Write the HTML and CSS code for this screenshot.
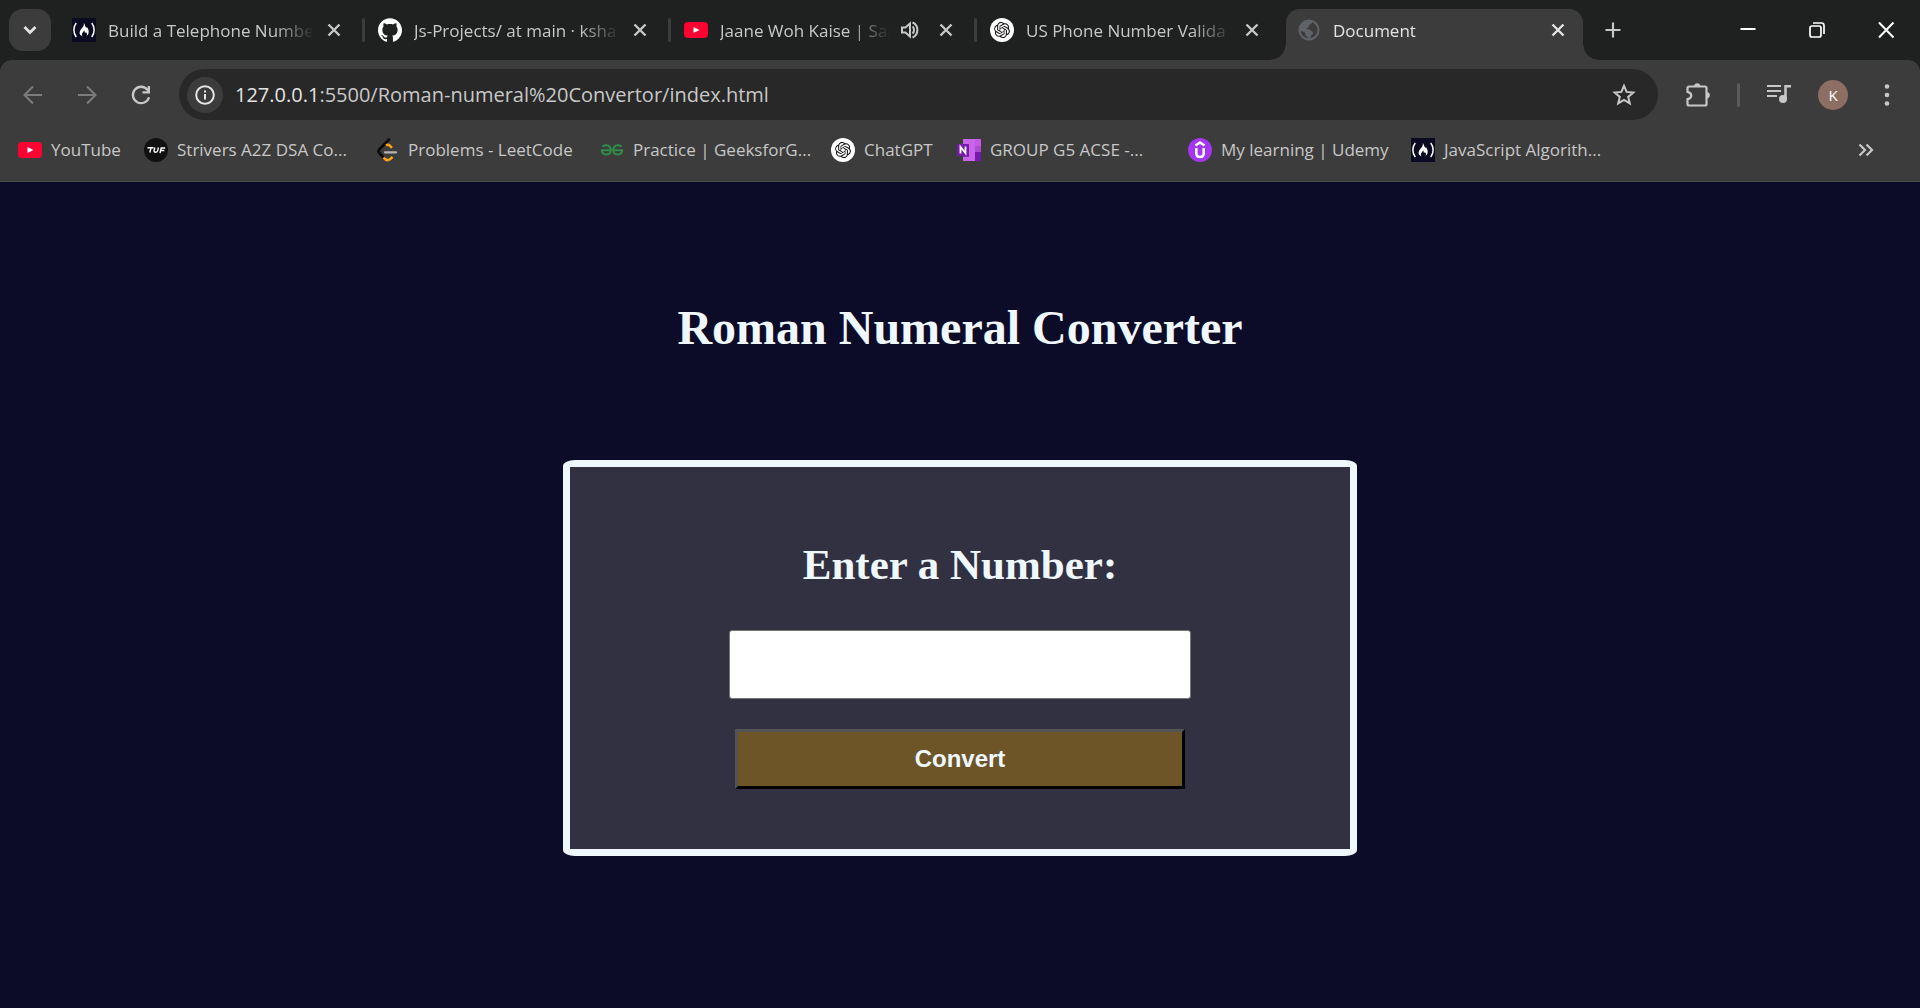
FILE: index.html
```html
<!DOCTYPE html>
<html lang="en">
<head>
<meta charset="utf-8">
<title>Document</title>
<link rel="stylesheet" href="styles.css">
</head>
<body>
<svg class="defs" aria-hidden="true">
  <symbol id="fcc" viewBox="0 0 24 24"><rect width="24" height="24" fill="#0a0a23"/><path d="M4.3 5C1.200 8.600.900 14.800 4.300 19M19.700 5c3.100 3.600 3.400 9.800 0 14" fill="none" stroke="#fff" stroke-width="1.500"/><path d="M11.600 5c1.600 1.200 1.300 3.400 2.500 4.600.5.500.8.300.8-.5 1.900 2.300 3.100 6.900-.4 8.900.9-1.500.6-3.100-.8-4.100.1 1.200-.7 1.300-1 .4-.3-.9.100-1.400-.3-2.100-1.400 2-3.700 4-1.600 6.300C5.500 16.700 8 12.300 10 10.100c1.600-1.700 2.300-3.200 1.600-5.100z" fill="#fff"/></symbol>
  <symbol id="youtube" viewBox="0 0 24 24"><rect y="4" width="24" height="16" rx="4" fill="#ff0033"/><path d="M9.500 9v6l6-3z" fill="#fff"/></symbol>
  <symbol id="openai" viewBox="0 0 36 36"><circle cx="18" cy="18" r="18" fill="#fff"/><path transform="translate(6 6)" fill="#111" d="M22.2819 9.8211a5.9847 5.9847 0 0 0-.5157-4.9108 6.0462 6.0462 0 0 0-6.5098-2.9A6.0651 6.0651 0 0 0 4.9807 4.1818a5.9847 5.9847 0 0 0-3.9977 2.9 6.0462 6.0462 0 0 0 .7427 7.0966 5.98 5.98 0 0 0 .511 4.9107 6.051 6.051 0 0 0 6.5146 2.9001A5.9847 5.9847 0 0 0 13.2599 24a6.0557 6.0557 0 0 0 5.7718-4.2058 5.9894 5.9894 0 0 0 3.9977-2.9001 6.0557 6.0557 0 0 0-.7475-7.0729zm-9.022 12.6081a4.4755 4.4755 0 0 1-2.8764-1.0408l.1419-.0804 4.7783-2.7582a.7948.7948 0 0 0 .3927-.6813v-6.7369l2.02 1.1686a.071.071 0 0 1 .038.052v5.5826a4.504 4.504 0 0 1-4.4945 4.4944zm-9.6607-4.1254a4.4708 4.4708 0 0 1-.5346-3.0137l.142.0852 4.783 2.7582a.7712.7712 0 0 0 .7806 0l5.8428-3.3685v2.3324a.0804.0804 0 0 1-.0332.0615L9.74 19.9502a4.4992 4.4992 0 0 1-6.1408-1.6464zM2.3408 7.8956a4.485 4.485 0 0 1 2.3655-1.9728V11.6a.7664.7664 0 0 0 .3879.6765l5.8144 3.3543-2.0201 1.1685a.0757.0757 0 0 1-.071 0l-4.8303-2.7865A4.504 4.504 0 0 1 2.3408 7.872zm16.5963 3.8558L13.1038 8.364 15.1192 7.2a.0757.0757 0 0 1 .071 0l4.8303 2.7913a4.4944 4.4944 0 0 1-.6765 8.1042v-5.6772a.79.79 0 0 0-.407-.667zm2.0107-3.0231l-.142-.0852-4.7735-2.7818a.7759.7759 0 0 0-.7854 0L9.409 9.2297V6.8974a.0662.0662 0 0 1 .0284-.0615l4.8303-2.7866a4.4992 4.4992 0 0 1 6.6802 4.66zM8.3065 12.863l-2.02-1.1638a.0804.0804 0 0 1-.038-.0567V6.0742a4.4992 4.4992 0 0 1 7.3757-3.4537l-.142.0805L8.704 5.459a.7948.7948 0 0 0-.3927.6813zm1.0976-2.3654l2.602-1.4998 2.6069 1.4998v2.9994l-2.5974 1.4997-2.6067-1.4997Z"/></symbol>
  <symbol id="x" viewBox="0 0 24 24"><path d="M6.500 6.500l11 11m0-11l-11 11" stroke="currentColor" stroke-width="2.400" fill="none"/></symbol>
</svg>

<header class="browser">
  <div class="tabstrip">
    <button class="tab-search" aria-label="Search tabs"><svg viewBox="0 0 24 24"><path d="M6.500 9l5.500 5.500L17.500 9" fill="none" stroke="#e3e3e3" stroke-width="2.800"/></svg></button>
    <nav class="tabs" aria-label="Tabs">
      <div class="tab"><svg class="favicon"><use href="#fcc"/></svg><span class="title">Build a Telephone Numbe</span><button class="icon-btn" aria-label="Close"><svg><use href="#x"/></svg></button></div>
      <i class="divider"></i>
      <div class="tab"><svg class="favicon" viewBox="0 0 24 24"><path fill="#fff" d="M12 .297c-6.630 0-12 5.373-12 12 0 5.303 3.438 9.800 8.205 11.385.6.113.82-.258.82-.577 0-.285-.010-1.040-.015-2.040-3.338.724-4.042-1.610-4.042-1.610C4.422 18.070 3.633 17.700 3.633 17.700c-1.087-.744.084-.729.084-.729 1.205.084 1.838 1.236 1.838 1.236 1.070 1.835 2.809 1.305 3.495.998.108-.776.417-1.305.76-1.605-2.665-.3-5.466-1.332-5.466-5.930 0-1.310.465-2.380 1.235-3.220-.135-.303-.54-1.523.105-3.176 0 0 1.005-.322 3.300 1.230.96-.267 1.980-.399 3-.405 1.020.006 2.040.138 3 .405 2.280-1.552 3.285-1.230 3.285-1.230.645 1.653.24 2.873.12 3.176.765.840 1.230 1.910 1.230 3.220 0 4.610-2.805 5.625-5.475 5.920.42.360.81 1.096.81 2.220 0 1.606-.015 2.896-.015 3.286 0 .315.210.690.825.570C20.565 22.092 24 17.592 24 12.297c0-6.627-5.373-12-12-12"/></svg><span class="title">Js-Projects/ at main · ksha</span><button class="icon-btn" aria-label="Close"><svg><use href="#x"/></svg></button></div>
      <i class="divider"></i>
      <div class="tab"><svg class="favicon"><use href="#youtube"/></svg><span class="title">Jaane Woh Kaise | San</span><button class="icon-btn audio" aria-label="Mute tab"><svg viewBox="0 0 24 24"><path d="M4 9.500h3.500L12 5.500v13l-4.500-4H4z" fill="none" stroke="currentColor" stroke-width="2"/><path d="M14.500 8.500c2 1.500 2 5.500 0 7M14.500 4.500c6.500 2.500 6.500 12.500 0 15" fill="none" stroke="currentColor" stroke-width="2"/></svg></button><button class="icon-btn" aria-label="Close"><svg><use href="#x"/></svg></button></div>
      <i class="divider"></i>
      <div class="tab"><svg class="favicon"><use href="#openai"/></svg><span class="title">US Phone Number Valida</span><button class="icon-btn" aria-label="Close"><svg><use href="#x"/></svg></button></div>
      <div class="tab active"><svg class="favicon" viewBox="0 0 24 24"><circle cx="12" cy="12" r="9.500" fill="#3c3c3c" stroke="#5f6368" stroke-width="2"/><path d="M3 9c1-4 5-7 9-6.500L15.500 4c-.5 2-3.500 2-3.500 4 0 1.500-2 1.500-2.500 2.500S13 11 14 12.500s2 .5 2 2.500-2.500 2-2.500 4.500L12 21.500c-1-3-3.500-3-3.500-5.500S4.500 13.500 2.500 12z" fill="#5f6368"/></svg><span class="title">Document</span><button class="icon-btn" aria-label="Close"><svg><use href="#x"/></svg></button></div>
    </nav>
    <button class="new-tab" aria-label="New tab"><svg viewBox="0 0 24 24"><path d="M12 4.500v15M4.500 12h15" stroke="#c7c7c7" stroke-width="2.200"/></svg></button>
    <div class="window-controls">
      <button aria-label="Minimize"><svg viewBox="0 0 24 24"><path d="M4.500 11h15" stroke="#fff" stroke-width="2"/></svg></button>
      <button aria-label="Restore"><svg viewBox="0 0 24 24"><g fill="none" stroke="#fff" stroke-width="1.700"><rect x="5" y="8" width="11" height="11" rx="2"/><path d="M8 5h8.500A2.500 2.500 0 0 1 19 7.500V16"/></g></svg></button>
      <button aria-label="Close window"><svg viewBox="0 0 24 24"><path d="M5 4.500l14.500 15m0-15L5 19.500" stroke="#fff" stroke-width="2"/></svg></button>
    </div>
  </div>

  <div class="toolbar">
    <div class="nav-buttons">
      <button aria-label="Back"><svg viewBox="0 0 24 24"><path d="M21 12H4.500M12 3.500L3.500 12l8.500 8.500" fill="none" stroke="#7c7c7c" stroke-width="2"/></svg></button>
      <button aria-label="Forward"><svg viewBox="0 0 24 24"><path d="M3 12h16.500M12 3.500l8.500 8.500-8.500 8.500" fill="none" stroke="#7c7c7c" stroke-width="2"/></svg></button>
      <button aria-label="Reload"><svg viewBox="0 0 24 24"><path d="M20 14.200A8.200 8.200 0 1 1 18.500 6.800L20 8.500" fill="none" stroke="#c7c7c7" stroke-width="2.300"/><path d="M21 3v7.500h-7.500V8.300h5.200V3z" fill="#c7c7c7"/></svg></button>
    </div>
    <div class="omnibox">
      <button class="site-info" aria-label="Site information"><svg viewBox="0 0 24 24"><circle cx="12" cy="12" r="8.800" fill="none" stroke="#e3e3e3" stroke-width="2"/><path d="M12 11v5.500M12 7.500v2" stroke="#e3e3e3" stroke-width="2"/></svg></button>
      <div class="url"><span>127.0.0.1</span>:5500/Roman-numeral%20Convertor/index.html</div>
      <button class="star" aria-label="Bookmark this page"><svg viewBox="0 0 24 24"><path d="M12 2.800l2.600 6.100 6.700.6-5.100 4.400 1.600 6.500L12 16.900l-5.800 3.500 1.600-6.500-5.100-4.400 6.700-.6z" fill="none" stroke="#c7c7c7" stroke-width="2"/></svg></button>
    </div>
    <div class="actions">
      <button aria-label="Extensions"><svg viewBox="0 0 28 28"><path d="M5 5.500h16a1.500 1.500 0 0 1 1.500 1.500v16a1.500 1.500 0 0 1-1.500 1.500H5A1.500 1.500 0 0 1 3.500 23v-4.800c5-1 5-6.400 0-7.400V7A1.500 1.500 0 0 1 5 5.500z" fill="none" stroke="#c7c7c7" stroke-width="2.200"/><path d="M10 5.500c0-4.500 6.500-4.500 6.500 0zM22.500 11c4.500 0 4.500 6.500 0 6.500z" fill="#c7c7c7"/></svg></button>
      <i class="divider"></i>
      <button aria-label="Media controls"><svg viewBox="0 0 28 28"><path d="M2 5h14M2 10h14M2 15h10" stroke="#c7c7c7" stroke-width="2.200"/><path d="M20.500 18V5.200H26" fill="none" stroke="#c7c7c7" stroke-width="2.500"/><circle cx="18" cy="18" r="4" fill="#c7c7c7"/></svg></button>
      <button class="avatar" aria-label="Profile">K</button>
      <button aria-label="Menu"><svg viewBox="0 0 28 28" fill="#c7c7c7"><circle cx="14" cy="5.500" r="2.300"/><circle cx="14" cy="14" r="2.300"/><circle cx="14" cy="22.500" r="2.300"/></svg></button>
    </div>
  </div>

  <nav class="bookmarks" aria-label="Bookmarks">
    <a href="#"><svg><use href="#youtube"/></svg>YouTube</a>
    <a href="#"><svg viewBox="0 0 24 24"><circle cx="12" cy="12" r="12" fill="#111"/><path d="M3.500 9.800h6M7 9.800l-1.200 4.700M10.800 9.500l-.7 3q-.3 1.700 1.500 1.700t2.100-1.700l.7-3M16 15l1.200-5h4M16.800 12.500h3.500" fill="none" stroke="#fff" stroke-width="1.400"/></svg>Strivers A2Z DSA Co...</a>
    <a href="#"><svg viewBox="0 0 24 24"><path d="M14 1.500L4.500 11.200q-1.800 2 0 4L8 19" fill="none" stroke="#0a0a0a" stroke-width="2.700" stroke-linecap="round"/><path d="M11 7.500q2.200-1.500 4 .3l2 2M8.500 19.500q3 4 6.500 1.800l2.500-2.300" fill="none" stroke="#ffa116" stroke-width="2.500"/><path d="M10 14.300h11" stroke="#b3b3b3" stroke-width="2.300" stroke-linecap="round"/></svg>Problems - LeetCode</a>
    <a href="#"><svg viewBox="0 0 24 24"><g fill="none" stroke="#2f8d46" stroke-width="2"><path d="M1 12.300h9.800M2.500 8.500C6 6 10.800 7.500 10.800 12c0 5.500-8 6.500-9 .3"/><path d="M23 12.300h-9.800M21.500 8.500C18 6 13.200 7.500 13.200 12c0 5.500 8 6.500 9 .3"/></g></svg>Practice | GeeksforG...</a>
    <a href="#"><svg><use href="#openai"/></svg>ChatGPT</a>
    <a href="#"><svg viewBox="0 0 24 24"><path d="M6 1h18v22H6z" fill="#ca64ea"/><path d="M18 1h6v7h-6z" fill="#c65ae6"/><path d="M18 8h6v6h-6z" fill="#ae4bd5"/><path d="M18 14h6v9h-6z" fill="#7719aa"/><path d="M6 6h6v13H6z" fill="#8a2bb5"/><rect y="6" width="12" height="12" rx="1" fill="#7719aa"/><path d="M3.500 15.500V8.800l5 6.400V8.500" fill="none" stroke="#fff" stroke-width="1.800"/></svg>GROUP G5 ACSE -...</a>
    <a href="#"><svg viewBox="0 0 24 24"><circle cx="12" cy="12" r="12" fill="#a435f0"/><path d="M7.500 7.500L12 4.500l4.500 3M8.300 10v5q0 4 3.700 4t3.700-4v-5" fill="none" stroke="#fff" stroke-width="2.500"/></svg>My learning | Udemy</a>
    <a href="#"><svg><use href="#fcc"/></svg>JavaScript Algorith...</a>
    <button class="overflow" aria-label="More bookmarks"><svg viewBox="0 0 24 24"><path d="M5.500 6.500l5.500 5.500-5.500 5.500M12.500 6.500l5.500 5.500-5.500 5.500" fill="none" stroke="#c7c7c7" stroke-width="2.200"/></svg></button>
  </nav>
</header>

<main class="page">
  <h1>Roman Numeral Converter</h1>
  <form class="card">
    <label for="number">Enter a Number:</label>
    <input id="number" type="text">
    <button type="button" class="convert">Convert</button>
  </form>
</main>
</body>
</html>
```
FILE: styles.css
```css
* { box-sizing: border-box; }

body {
  margin: 0;
  min-height: 100vh;
  display: flex;
  flex-direction: column;
  background: #0c0b28;
}

.defs { position: absolute; width: 0; height: 0; }

svg { display: block; width: 24px; height: 24px; flex: none; }

/* Browser frame */
.browser {
  font-family: "Open Sans", "Noto Sans", sans-serif;
  font-size: 17px;
  color: #c7c7c7;
  background: #1f2120;
}

.browser button {
  display: grid;
  place-items: center;
  flex: none;
  padding: 0;
  border: 0;
  background: none;
  color: inherit;
  font: inherit;
}

.tabstrip {
  display: flex;
  align-items: center;
  height: 60px;
  padding-left: 9px;
}

.browser .tab-search {
  width: 42px;
  height: 42px;
  margin-right: 8px;
  border-radius: 14px;
  background: #3c3c3c;
}

.tabs {
  display: flex;
  align-items: center;
  flex: 0 1 1524px;
  height: 100%;
  min-width: 0;
}

.tab {
  display: flex;
  align-items: center;
  flex: 0 1 303px;
  min-width: 0;
  padding: 0 16px 0 13px;
}

.title {
  flex: 1;
  min-width: 0;
  margin: 0 8px 0 12px;
  padding-top: 2px;
  overflow: hidden;
  white-space: nowrap;
  line-height: 24px;
  mask-image: linear-gradient(to left, transparent, #000 40px);
}

.browser .audio { margin-right: 12px; }

.divider {
  flex: none;
  width: 3px;
  height: 24px;
  border-radius: 2px;
  background: #3c3c3c;
}

.active {
  position: relative;
  align-self: flex-end;
  flex-basis: 297px;
  height: 51px;
  margin-left: 6px;
  padding: 0 13px 9px 11px;
  border-radius: 14px 14px 0 0;
  background: #3c3c3c;
  color: #e3e3e3;
}

/* Curved feet of the selected tab */
.active::before,
.active::after {
  content: "";
  position: absolute;
  bottom: 0;
  width: 15px;
  height: 15px;
}

.active::before {
  right: 100%;
  background: radial-gradient(circle at 0 0, transparent 14px, #3c3c3c 15px);
}

.active::after {
  left: 100%;
  background: radial-gradient(circle at 100% 0, transparent 14px, #3c3c3c 15px);
}

.new-tab { margin-left: 18px; }

.window-controls {
  display: flex;
  margin-left: auto;
}

.window-controls button { width: 69px; height: 60px; }

.toolbar {
  display: flex;
  align-items: center;
  gap: 26px;
  padding: 9px 19px 9px 21px;
  border-radius: 12px 12px 0 0;
  background: #3c3c3c;
}

.nav-buttons { display: flex; gap: 30px; }

.omnibox {
  flex: 1;
  display: flex;
  align-items: center;
  height: 51px;
  padding: 0 22px 0 8px;
  border-radius: 26px;
  background: #282828;
}

.browser .site-info {
  width: 36px;
  height: 36px;
  border-radius: 50%;
  background: #3c3c3c;
}

.url {
  flex: 1;
  margin-left: 12px;
  font-size: 20px;
  line-height: 28px;
}

.url span { color: #e3e3e3; }

.actions {
  display: flex;
  align-items: center;
  gap: 25px;
}

.actions svg { width: 28px; height: 28px; }

.actions .divider { background: #5a5a5a; }

.browser .avatar {
  width: 30px;
  height: 30px;
  border-radius: 50%;
  background: #8d6e63;
  color: #fff;
  font-size: 15px;
}

.bookmarks {
  display: grid;
  grid-template-columns: 126px 231px 225px 231px 126px 231px 223px 1fr auto;
  align-items: center;
  height: 53px;
  padding: 0 42px 10px 18px;
  border-bottom: 1px solid #4a4a4a;
  background: #3c3c3c;
}

.bookmarks a {
  display: flex;
  align-items: center;
  gap: 9px;
  color: inherit;
  text-decoration: none;
  white-space: nowrap;
  line-height: 24px;
}

/* Page */
.page {
  flex: 1;
  display: flex;
  flex-direction: column;
  align-items: center;
  color: aliceblue;
  font-family: "Liberation Serif", serif;
}

h1 {
  margin: 117px 0 103px;
  font-size: 48px;
  line-height: 58px;
}

.card {
  display: flex;
  flex-direction: column;
  align-items: center;
  width: 794px;
  max-width: 100%;
  padding: 73px 0 60px;
  border: 7px solid aliceblue;
  border-radius: 12px / 6px;
  background: #323141;
}

label {
  font-size: 43px;
  font-weight: bold;
  line-height: 50px;
}

input {
  width: 462px;
  height: 69px;
  max-width: 100%;
  margin: 40px 0 30px;
  border: 1px solid #767676;
  border-radius: 3px;
  background: #fff;
  font-size: 24px;
}

.convert {
  width: 450px;
  height: 60px;
  max-width: 100%;
  border: 3px solid;
  border-color: #545454 #000 #000 #545454;
  background: #6d5527;
  color: aliceblue;
  font: bold 24px "Liberation Sans", sans-serif;
}
```
